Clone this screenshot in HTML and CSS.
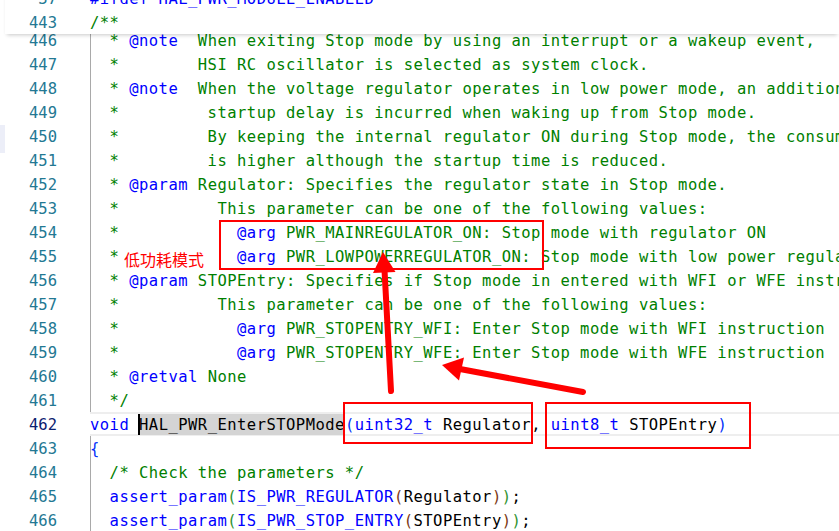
FILE: index.html
```html
<!DOCTYPE html>
<html lang="zh">
<head>
<meta charset="utf-8">
<title>stm32 pwr</title>
<link rel="stylesheet" href="styles.css">
</head>
<body>
<div class="window">
  <div class="side"><div class="side-mark"></div></div>
  <div class="editor">
    <div class="sticky">
      <div class="row"><span class="ln">37</span><span></span><span class="code"><span class="k">#ifdef HAL_PWR_MODULE_ENABLED</span></span></div>
      <div class="row"><span class="ln">443</span><span></span><span class="code"><span class="c">/**</span></span></div>
    </div>
    <div class="lines">
      <div class="row"><span class="ln">446</span><span></span><span class="code g"><span class="c">  * </span><span class="k">@note</span><span class="c">  When exiting Stop mode by using an interrupt or a wakeup event,</span></span></div>
      <div class="row"><span class="ln">447</span><span></span><span class="code g"><span class="c">  *        HSI RC oscillator is selected as system clock.</span></span></div>
      <div class="row"><span class="ln">448</span><span></span><span class="code g"><span class="c">  * </span><span class="k">@note</span><span class="c">  When the voltage regulator operates in low power mode, an additional</span></span></div>
      <div class="row"><span class="ln">449</span><span></span><span class="code g"><span class="c">  *         startup delay is incurred when waking up from Stop mode.</span></span></div>
      <div class="row"><span class="ln">450</span><span></span><span class="code g"><span class="c">  *         By keeping the internal regulator ON during Stop mode, the consumption</span></span></div>
      <div class="row"><span class="ln">451</span><span></span><span class="code g"><span class="c">  *         is higher although the startup time is reduced.</span></span></div>
      <div class="row"><span class="ln">452</span><span></span><span class="code g"><span class="c">  * </span><span class="k">@param</span><span class="c"> Regulator: Specifies the regulator state in Stop mode.</span></span></div>
      <div class="row"><span class="ln">453</span><span></span><span class="code g"><span class="c">  *          This parameter can be one of the following values:</span></span></div>
      <div class="row"><span class="ln">454</span><span></span><span class="code g"><span class="c">  *            </span><span class="k">@arg</span><span class="c"> PWR_MAINREGULATOR_ON: Stop mode with regulator ON</span></span></div>
      <div class="row"><span class="ln">455</span><span></span><span class="code g"><span class="c">  *            </span><span class="k">@arg</span><span class="c"> PWR_LOWPOWERREGULATOR_ON: Stop mode with low power regulator ON</span></span></div>
      <div class="row"><span class="ln">456</span><span></span><span class="code g"><span class="c">  * </span><span class="k">@param</span><span class="c"> STOPEntry: Specifies if Stop mode in entered with WFI or WFE instruction.</span></span></div>
      <div class="row"><span class="ln">457</span><span></span><span class="code g"><span class="c">  *          This parameter can be one of the following values:</span></span></div>
      <div class="row"><span class="ln">458</span><span></span><span class="code g"><span class="c">  *            </span><span class="k">@arg</span><span class="c"> PWR_STOPENTRY_WFI: Enter Stop mode with WFI instruction</span></span></div>
      <div class="row"><span class="ln">459</span><span></span><span class="code g"><span class="c">  *            </span><span class="k">@arg</span><span class="c"> PWR_STOPENTRY_WFE: Enter Stop mode with WFE instruction</span></span></div>
      <div class="row"><span class="ln">460</span><span></span><span class="code g"><span class="c">  * </span><span class="k">@retval</span><span class="c"> None</span></span></div>
      <div class="row"><span class="ln">461</span><span></span><span class="code g"><span class="c">  */</span></span></div>
      <div class="row cur"><span class="ln">462</span><span></span><span class="code"><span class="k">void</span> <span class="sel">HAL_PWR_EnterSTOPMode</span><span class="b1">(</span><span class="k">uint32_t</span> Regulator, <span class="k">uint8_t</span> STOPEntry<span class="b1">)</span></span></div>
      <div class="row"><span class="ln">463</span><span></span><span class="code g"><span class="b1">{</span></span></div>
      <div class="row"><span class="ln">464</span><span></span><span class="code g"><span class="c">  /* Check the parameters */</span></span></div>
      <div class="row"><span class="ln">465</span><span></span><span class="code g">  <span class="k">assert_param</span><span class="b2">(</span><span class="k">IS_PWR_REGULATOR</span><span class="b3">(</span>Regulator<span class="b3">)</span><span class="b2">)</span>;</span></div>
      <div class="row"><span class="ln">466</span><span></span><span class="code g">  <span class="k">assert_param</span><span class="b2">(</span><span class="k">IS_PWR_STOP_ENTRY</span><span class="b3">(</span>STOPEntry<span class="b3">)</span><span class="b2">)</span>;</span></div>
    </div>
  </div>
  <div class="ann">
    <div class="box box1"></div>
    <div class="box box2"></div>
    <div class="box box3"></div>
    <div class="note">低功耗模式</div>
    <svg class="arrows" width="839" height="531" viewBox="0 0 839 531">
      <line x1="391" y1="391" x2="384.5" y2="270" stroke="#ff0000" stroke-width="6" stroke-linecap="round"/>
      <polygon points="383,252 395.5,272 373,273" fill="#ff0000"/>
      <line x1="583" y1="392" x2="460" y2="369" stroke="#ff0000" stroke-width="6" stroke-linecap="round"/>
      <polygon points="442,365 464,357.5 459,380.5" fill="#ff0000"/>
    </svg>
  </div>
</div>
</body>
</html>
```
FILE: styles.css
```css
html, body {
  margin: 0;
  padding: 0;
  background: #ffffff;
  overflow: hidden;
}

.window {
  position: relative;
  width: 839px;
  height: 531px;
  display: flex;
  overflow: hidden;
  background: #ffffff;
  font-family: "DejaVu Sans Mono", monospace;
  font-size: 15.5px;
  letter-spacing: 0.47px;
}

.side {
  width: 5px;
  flex: none;
}

.side-mark {
  margin-top: 125px;
  height: 28px;
  background: #eceef8;
}

.editor {
  flex: 1;
  position: relative;
  min-width: 0;
}

.sticky {
  position: absolute;
  top: -14px;
  left: 0;
  right: 0;
  background: #ffffff;
  z-index: 2;
  box-shadow: 0 3px 4px -2px rgba(0, 0, 0, 0.22);
}

.lines {
  padding-top: 28px;
}

.row {
  display: grid;
  grid-template-columns: 53px 32px 1fr;
  height: 24px;
}

.ln,
.code {
  box-sizing: border-box;
  height: 24px;
  padding-top: 3px;
  line-height: 21px;
}

.ln {
  text-align: right;
  color: #237893;
  letter-spacing: 0;
  padding-right: 1px;
}

.code {
  position: relative;
  white-space: pre;
  color: #000000;
}

.g::before {
  content: "";
  position: absolute;
  left: 0;
  top: 0;
  bottom: 0;
  width: 1px;
  background: #a9a9a9;
}

.cur .ln {
  color: #0b216f;
}

.cur .code {
  box-shadow: inset 0 2px #eeeeee, inset 0 -2px #eeeeee;
}

.sel {
  position: relative;
  background: #d4d4d4;
  padding: 2px 0 1px;
}

.sel::before {
  content: "";
  position: absolute;
  left: -1px;
  top: 0;
  bottom: 0;
  width: 2px;
  background: #000000;
}

.c { color: #008000; }
.k { color: #0000ff; }
.b1 { color: #0431fa; }
.b2 { color: #319331; }
.b3 { color: #7b3814; }

.ann {
  position: absolute;
  left: 0;
  top: 0;
  width: 839px;
  height: 531px;
  pointer-events: none;
  z-index: 3;
}

.box {
  position: absolute;
  box-sizing: border-box;
  border: 2px solid #ff0000;
}

.box1 { left: 219px; top: 220px; width: 325px; height: 50px; }
.box2 { left: 343px; top: 402px; width: 190px; height: 42px; }
.box3 { left: 545px; top: 402px; width: 206px; height: 47px; }

.note {
  position: absolute;
  left: 124px;
  top: 249px;
  font-family: "Noto Sans CJK SC", sans-serif;
  font-size: 16px;
  line-height: 20px;
  letter-spacing: 0;
  color: #ff0000;
}

.arrows {
  position: absolute;
  left: 0;
  top: 0;
}
```
